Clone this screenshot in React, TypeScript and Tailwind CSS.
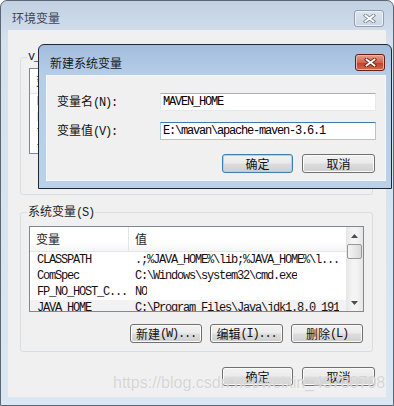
import clsx from "clsx"
import type { ReactNode } from "react"

const zh = "font-['Noto_Sans_CJK_SC','Noto_Sans_CJK_JP',sans-serif]"
const mono = "font-['Liberation_Mono','Noto_Sans_CJK_SC',monospace] tracking-[-1.2px]"

// half-width ascii part of a label, simsun-ish
const A = ({ children }: { children: ReactNode }) => <span className={mono}>{children}</span>

const Btn = ({ children, primary, className }: { children: ReactNode; primary?: boolean; className?: string }) => (
    <button
        className={clsx(
            "h-[19px] rounded-[3px] border flex items-center justify-center text-[12px] leading-none text-[#111] bg-[linear-gradient(#f2f2f2_0%,#ebebeb_48%,#dddddd_52%,#cfcfcf_100%)]",
            zh,
            primary
                ? "border-[#3c7fb1] shadow-[inset_0_0_0_1px_#9fd6f5]"
                : "border-[#707070] shadow-[inset_0_0_0_1px_#fbfbfb]",
            className
        )}
    >
        {children}
    </button>
)

const CloseX = ({ dark }: { dark: string }) => (
    <svg width="13" height="9" viewBox="0 0 13 9">
        <path d="M2.5 1.5 L10.5 7.5 M10.5 1.5 L2.5 7.5" stroke={dark} strokeWidth="3.6" strokeLinecap="square" />
        <path d="M2.5 1.5 L10.5 7.5 M10.5 1.5 L2.5 7.5" stroke="#fff" strokeWidth="1.8" strokeLinecap="square" />
    </svg>
)

const Arrow = ({ up }: { up?: boolean }) => (
    <svg width="7" height="4" viewBox="0 0 7 4">
        <path d={up ? "M0 4 L3.5 0 L7 4 Z" : "M0 0 L3.5 4 L7 0 Z"} fill="#4d4d4d" />
    </svg>
)

type Row = { name: string; value: string }

const ListBox = ({ rows, hover }: { rows: Row[]; hover?: number }) => (
    <div className="w-[335px] h-[86px] border border-[#828790] bg-white flex overflow-hidden">
        <div className="flex-1 flex flex-col">
            <div className={clsx("h-[25px] shrink-0 flex items-center border-b border-[#e5e5e5] bg-[linear-gradient(#ffffff_60%,#f4f5f7)] text-[12px] text-[#1e1e1e]", zh)}>
                <div className="w-[99px] h-full pl-[6px] flex items-center border-r border-[#e5e5e5]">变量</div>
                <div className="pl-[6px]">值</div>
            </div>
            {rows.map((r, idx) => (
                <div
                    key={idx}
                    className={clsx(
                        "h-[16px] shrink-0 flex items-center text-[12px] text-[#111]",
                        mono,
                        hover === idx && "bg-[#f2f2f2]"
                    )}
                >
                    <div className="w-[99px] pl-[7px] whitespace-nowrap overflow-hidden">{r.name}</div>
                    <div className="pl-[6px] whitespace-nowrap overflow-hidden">{r.value}</div>
                </div>
            ))}
        </div>
        <div className="w-[17px] h-full flex flex-col items-center bg-[linear-gradient(90deg,#e6e6e6,#f4f4f4_40%,#f4f4f4_60%,#e6e6e6)]">
            <div className="h-[17px] flex items-center justify-center"><Arrow up /></div>
            <div className="w-[15px] h-[15px] rounded-[2px] border border-[#979797] bg-[linear-gradient(90deg,#f3f3f3,#e8e8e8_50%,#d9d9d9)]" />
            <div className="flex-1" />
            <div className="h-[17px] flex items-center justify-center"><Arrow /></div>
        </div>
    </div>
)

const userRows: Row[] = [
    { name: "MAVEN_HOME", value: "E:\\mavan\\apache-maven-3.6.1" },
    { name: "Path", value: "%MAVEN_HOME%\\bin" },
    { name: "TEMP", value: "%USERPROFILE%\\AppData\\Local\\Temp" },
    { name: "TMP", value: "%USERPROFILE%\\AppData\\Local\\Temp" },
]

const sysRows: Row[] = [
    { name: "CLASSPATH", value: ".;%JAVA_HOME%\\lib;%JAVA_HOME%\\l..." },
    { name: "ComSpec", value: "C:\\Windows\\system32\\cmd.exe" },
    { name: "FP_NO_HOST_C...", value: "NO" },
    { name: "JAVA_HOME", value: "C:\\Program Files\\Java\\jdk1.8.0_191" },
]

export default function App() {
    return (
        <div className="relative w-[394px] h-[406px] bg-white overflow-hidden">
            {/* 环境变量 window */}
            <div className="w-[394px] h-[406px] rounded-t-[7px] border border-[#5b6676] bg-[linear-gradient(#c2d0e2,#d6e1ee_40px,#dbe6f3)] flex flex-col">
                <div className="h-[29px] shrink-0 flex items-start justify-between pl-[11px] pr-[9px]">
                    <span className={clsx("mt-[9px] text-[12px] leading-[16px] text-[#3c4654]", zh)}>环境变量</span>
                    <div className="mt-[9px] w-[30px] h-[17px] rounded-[3px] border border-[#8f9db1] bg-[linear-gradient(#dde5ef,#cbd6e4)] flex items-center justify-center shadow-[inset_0_0_0_1px_#eef3f8]">
                        <CloseX dark="#7d8ba0" />
                    </div>
                </div>
                <div className="mx-[7px] h-[367px] shrink-0 bg-[#f0f0f0] flex flex-col">
                    <fieldset className="mt-[20px] ml-[12px] w-[353px] h-[145px] border border-[#d5dfe5] rounded-[3px]">
                        <legend className={clsx("ml-[6px] px-[1px] text-[12px] leading-[14px] text-[#1e1e1e]", mono)}>v_user 的用户变量(U)</legend>
                        <div className="mt-[4px] ml-[8px]">
                            <ListBox rows={userRows} />
                        </div>
                    </fieldset>

                    <fieldset className="mt-[9px] ml-[12px] w-[353px] h-[148px] border border-[#d5dfe5] rounded-[3px] flex flex-col">
                        <legend className={clsx("ml-[6px] px-[1px] text-[12px] leading-[14px] text-[#1e1e1e]", zh)}>
                            系统变量<A>(S)</A>
                        </legend>
                        <div className="mt-[6px] ml-[8px]">
                            <ListBox rows={sysRows} hover={3} />
                        </div>
                        <div className="mt-[12px] pr-[9px] flex justify-end gap-[8px]">
                            <Btn className="w-[72px]">新建<A>(W)...</A></Btn>
                            <Btn className="w-[73px]">编辑<A>(I)...</A></Btn>
                            <Btn className="w-[72px]">删除<A>(L)</A></Btn>
                        </div>
                    </fieldset>

                    <div className="mt-[15px] pr-[11px] flex justify-end gap-[9px]">
                        <Btn className="w-[71px]">确定</Btn>
                        <Btn className="w-[73px]">取消</Btn>
                    </div>
                </div>
            </div>

            {/* 新建系统变量 dialog */}
            <div className="absolute left-[38px] top-[44px] w-[354px] h-[145px] rounded-t-[6px] border border-[#1f2733] bg-[linear-gradient(#a3bddd,#b6cde8_30px,#bad1ea)] flex flex-col">
                <div className="h-[30px] shrink-0 flex items-start justify-between pl-[11px] pr-[6px]">
                    <span className={clsx("mt-[10px] text-[12px] leading-[16px] text-[#141a22]", zh)}>新建系统变量</span>
                    <div className="mt-[9px] w-[30px] h-[17px] rounded-[3px] border border-[#6a1d12] bg-[linear-gradient(#e6a08f,#d0634b_50%,#c3412a_55%,#d26a4f)] flex items-center justify-center shadow-[inset_0_0_0_1px_#eeb3a5]">
                        <CloseX dark="#6a2418" />
                    </div>
                </div>
                <div className="ml-[7px] w-[340px] h-[106px] bg-[#f0f0f0] border border-[#f6f8fb] flex flex-col">
                    <div className={clsx("mt-[16px] grid grid-cols-[103px_216px] gap-y-[9px] pl-[10px] items-center text-[12px] text-[#111]", zh)}>
                        <span>变量名<A>(N):</A></span>
                        <div className={clsx("h-[18px] border border-[#e3e9ef] border-t-[#abadb3] bg-white pl-[2px] flex items-center text-[12px] text-black", mono)}>MAVEN_HOME</div>
                        <span>变量值<A>(V):</A></span>
                        <div className={clsx("h-[18px] border border-[#a4c9e3] border-t-[#3d7bad] bg-white pl-[2px] flex items-center text-[12px] text-black", mono)}>E:\mavan\apache-maven-3.6.1</div>
                    </div>
                    <div className="mt-[13px] pr-[10px] flex justify-end gap-[9px]">
                        <Btn primary className="w-[71px]">确定</Btn>
                        <Btn className="w-[73px]">取消</Btn>
                    </div>
                </div>
            </div>

            {/* watermark */}
            <div className="absolute left-[113px] top-[374px] text-[16px] leading-[18px] font-['Liberation_Sans',Arial,sans-serif] text-[rgba(195,195,195,0.7)] [text-shadow:0_0_1px_#ffffff] pointer-events-none">
                https://blog.csdn.net/weixin_43788708
            </div>
        </div>
    )
}
